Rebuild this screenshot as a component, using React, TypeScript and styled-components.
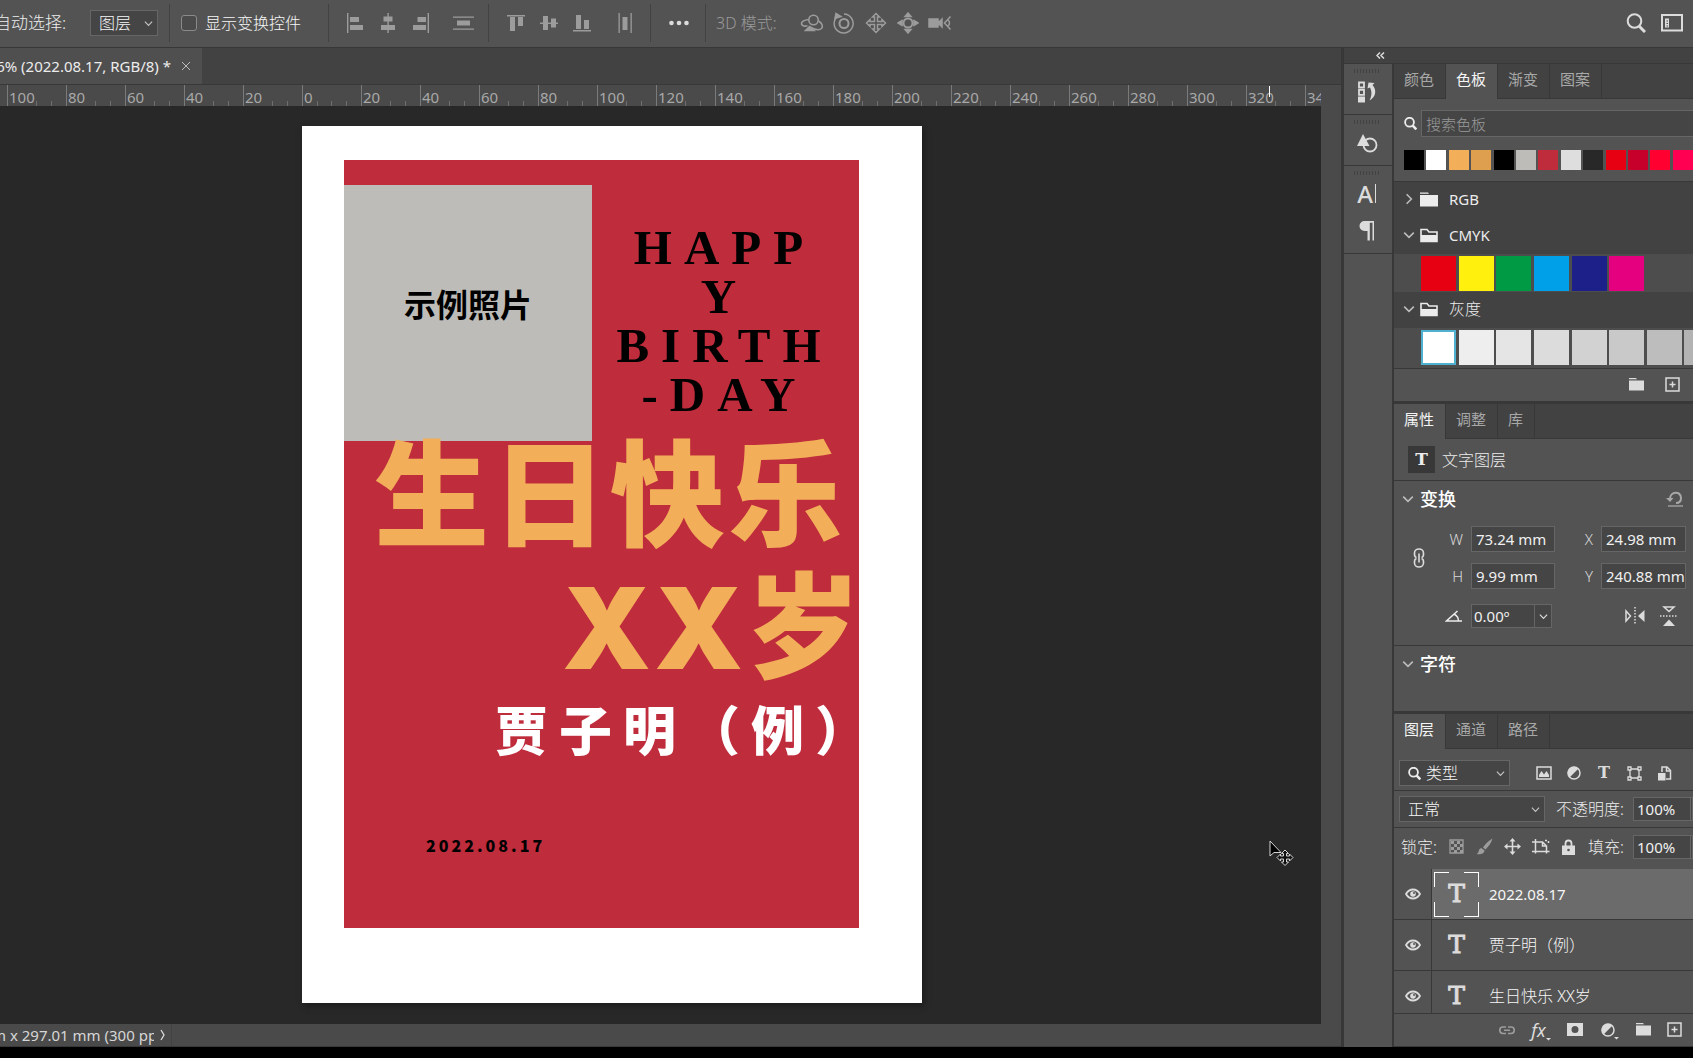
import React from "react";
import styled, { createGlobalStyle } from "styled-components";

const c = {
  bar: "#535353",
  dark: "#424242",
  ruler: "#4a4a4a",
  canvas: "#282828",
  line: "#383838",
  field: "#454545",
  fieldLine: "#666666",
  text: "#ececec",
  muted: "#a8a8a8",
  icon: "#dcdcdc",
  dimIcon: "#9c9c9c",
  red: "#bf2c3c",
  gold: "#f2ae59",
};

const uiFont = `"Noto Sans", "Noto Sans CJK SC", sans-serif`;

const GlobalStyle = createGlobalStyle`
  *, *::before, *::after { box-sizing: border-box; }
  body { margin: 0; background: #000; overflow: hidden; }
  button, input, select { font: inherit; color: inherit; }
`;

const Shell = styled.div`
  display: flex;
  flex-direction: column;
  height: 100vh;
  padding-bottom: 11px;
  background: #000;
  color: ${c.text};
  font: 300 15px/20px ${uiFont};
  overflow: hidden;
`;

/* ---------- shared controls ---------- */

const IconButton = styled.button<{ $w?: number; $dim?: boolean }>`
  display: flex;
  align-items: center;
  justify-content: center;
  flex: none;
  width: ${(p) => p.$w ?? 20}px;
  height: 22px;
  padding: 0;
  border: 0;
  background: none;
  color: ${(p) => (p.$dim ? c.dimIcon : c.icon)};
`;

const SelectBox = styled.div<{ $w: number; $h: number }>`
  position: relative;
  display: flex;
  align-items: center;
  flex: none;
  width: ${(p) => p.$w}px;
  height: ${(p) => p.$h}px;
  border: 1px solid ${c.fieldLine};
  background: ${c.field};
`;

const Select = styled.select<{ $pad: number }>`
  appearance: none;
  width: 100%;
  height: 100%;
  padding: 0 20px 0 ${(p) => p.$pad}px;
  border: 0;
  background: none;
  color: #f6f6f6;
  font-size: 16px;
`;

const SelectArrow = styled.span`
  position: absolute;
  right: 4px;
  top: 50%;
  display: flex;
  margin-top: -4px;
  color: #c4c4c4;
  pointer-events: none;
`;

const SelectLead = styled.span`
  position: absolute;
  left: 8px;
  display: flex;
  pointer-events: none;
`;

const Chevron = ({ size = 9 }: { size?: number }) => (
  <svg width={size} height={size} viewBox="0 0 10 10" fill="none" stroke="currentColor" strokeWidth="1.3">
    <path d="M1 3l4 4 4-4" />
  </svg>
);

function Dropdown(p: { label: string; value: string; w: number; h: number; pad: number; lead?: React.ReactNode }) {
  return (
    <SelectBox $w={p.w} $h={p.h}>
      {p.lead && <SelectLead>{p.lead}</SelectLead>}
      <Select aria-label={p.label} $pad={p.pad} defaultValue={p.value}>
        <option>{p.value}</option>
      </Select>
      <SelectArrow>
        <Chevron />
      </SelectArrow>
    </SelectBox>
  );
}

/* ---------- icons ---------- */

type Shape = { children: React.ReactNode; w?: number; h?: number; sw?: number };
const Line = ({ children, w = 20, h = 20, sw = 1.5 }: Shape) => (
  <svg width={w} height={h} viewBox={`0 0 ${w} ${h}`} fill="none" stroke="currentColor" strokeWidth={sw}>
    {children}
  </svg>
);
const Solid = ({ children, w = 20, h = 20 }: Shape) => (
  <svg width={w} height={h} viewBox={`0 0 ${w} ${h}`} fill="currentColor">
    {children}
  </svg>
);

const AlignLeft = () => <Solid><path d="M2 0h1.4v20H2zM5 4h9v5H5zM5 12h13v5H5z" /></Solid>;
const AlignCenter = () => <Solid><path d="M9.4 0h1.4v20H9.4zM5.5 3.500h9v5h-9zM3 12h14v5H3z" /></Solid>;
const AlignRight = () => <Solid><path d="M16.600 0H18v20h-1.400zM6.500 4h8.500v5H6.500zM2 12h13v5H2z" /></Solid>;
const DistributeV = () => <Solid w={22}><path d="M0 3.500h21v1.300H0zM0 15.500h21v1.300H0zM4 7.500h13v5H4z" /></Solid>;
const AlignTop = () => <Solid><path d="M1 2h18v1.400H1zM4 4h5v14H4zM12 4h5v9h-5z" /></Solid>;
const AlignMiddle = () => <Solid><path d="M1 9.500h18v1.400H1zM4 3h5v14H4zM12 5.500h5v9h-5z" /></Solid>;
const AlignBottom = () => <Solid><path d="M1 17h18v1.400H1zM4 2h5v14H4zM12 7h5v9h-5z" /></Solid>;
const DistributeH = () => <Solid><path d="M3.500 0h1.300v21H3.500zM15.500 0h1.300v21h-1.300zM7.500 4h5v13h-5z" /></Solid>;
const Dots = () => <Solid><circle cx="2.500" cy="10" r="2.300" /><circle cx="10" cy="10" r="2.300" /><circle cx="17.500" cy="10" r="2.300" /></Solid>;

const Orbit3D = () => (
  <Line w={24} sw={1.6}>
    <circle cx="13.500" cy="7" r="4.700" />
    <path d="M8.500 6.500C4 7 1 9 1.500 11c.400 2 3.500 2.500 6 1.800M18.500 8c3.500 2 5 5.500 3 7.500-2 1.800-7 1-11.500-1.500" />
    <path d="M5.500 17.500l4-4 4.500 4z" fill="currentColor" />
  </Line>
);
const Roll3D = () => (
  <Line w={22} h={22}>
    <circle cx="11" cy="11.500" r="4.500" strokeWidth="2" />
    <path d="M5.500 3.500A9.500 9.500 0 1 0 11 2" />
    <path d="M2 6.500l1-5 5 3z" fill="currentColor" />
  </Line>
);
const Pan3D = () => (
  <Line w={22} h={22}>
    <path d="M11 1.500l3.500 3.500h-2v4.500H17v-2l3.500 3.500-3.500 3.500v-2h-4.500V17h2L11 20.500 7.500 17h2v-4.500H5v2L1.500 11 5 7.500v2h4.500V5h-2z" />
  </Line>
);
const Slide3D = () => (
  <Line w={22} h={22}>
    <circle cx="11" cy="11" r="4.500" strokeWidth="2" />
    <path d="M11 1l3 3.500H8zM11 21l-3-3.500h6zM1 11l4-2.500v5zM21 11l-4-2.500v5z" fill="currentColor" />
  </Line>
);
const Camera3D = () => (
  <Line w={24}>
    <path d="M1 6h9v8H1zM10 10l4-4v8z" fill="currentColor" />
    <path d="M22.500 3.500L16.500 10l6 6.500M20 7c2 1.500 2 4.500 0 6" />
  </Line>
);
const Magnifier = ({ size = 20 }: { size?: number }) => (
  <svg width={size} height={size} viewBox="0 0 20 20" fill="none" stroke="currentColor">
    <circle cx="8.500" cy="8" r="6.800" strokeWidth={size < 16 ? 2.800 : 2} />
    <path d="M13 13l6 6" strokeWidth={size < 16 ? 4 : 3} />
  </svg>
);
const WorkspaceIcon = () => (
  <Line w={22} h={18} sw={2}>
    <path d="M1 1h20v15.500H1z" />
    <path d="M4 4.500h4v9H4z" fill="currentColor" stroke="none" />
    <path d="M5.500 7h1.500M5.500 9.500h1.500M5.500 12h1.500" stroke={c.bar} strokeWidth="1" />
  </Line>
);
const HistoryIcon = () => (
  <Line w={20} h={22} sw={1.8}>
    <path d="M2 1.500h5v5H2zM2 8.800h5v5H2z" />
    <path d="M1 15.500h7v6H1z" fill="currentColor" stroke="none" />
    <path d="M10.500 7.500l1-6 6 .500-2 2c4.500 5 3.500 12-3 15.500 2.500-5 2.500-9 .500-13z" fill="currentColor" stroke="none" />
  </Line>
);
const AdjustIcon = () => (
  <Line w={22} sw={1.8}>
    <circle cx="14" cy="12" r="6.500" />
    <path d="M7 1l6.500 12H1z" fill="currentColor" stroke="none" />
  </Line>
);
const ParagraphIcon = () => (
  <Solid w={18} h={20}><path d="M6.500 0H16v19.500h-1.500V1.800h-2.700v17.700H9.500V10h-3a5 5 0 0 1 0-10z" /></Solid>
);
const FolderIcon = ({ open }: { open?: boolean }) =>
  open ? (
    <Line w={18} h={15} sw={1.600}>
      <path d="M1 13.500V1.500h6l2 2.500h8v9.500z" />
      <path d="M1 7h16v6.500H1z" fill="currentColor" stroke="none" />
    </Line>
  ) : (
    <Solid w={18} h={15}><path d="M0 .500h8l1 1.300H0zM0 3h18v11.500H0z" /></Solid>
  );
const FolderSmall = () => <Solid w={15} h={13}><path d="M0 0h7l1 1.300H0zM0 2.500h15V12.500H0z" /></Solid>;
const PlusBox = () => <Line w={15} h={15} sw={1.500}><path d="M1 1h13v13H1zM7.500 4.500v6M4.500 7.500h6" /></Line>;
const LinkV = () => (
  <Line w={12} h={20} sw={1.600}>
    <path d="M3.500 9.500C1 9 1.500 6 1.500 5a4.500 4 0 0 1 9 0c0 1 .500 4-2 4.500M3.500 10.500C1 11 1.500 14 1.500 15a4.500 4 0 0 0 9 0c0-1 .500-4-2-4.500M6 5.500v9" />
  </Line>
);
const ResetIcon = () => (
  <Line w={18} h={18} sw={2}>
    <path d="M4 9C4 1 15 .500 15 8c0 3-2 5-5 5" />
    <path d="M0 8h7.500L4 12z" fill="currentColor" stroke="none" />
    <path d="M2 16h15" strokeWidth="1.300" />
  </Line>
);
const AngleIcon = () => <Line w={18} h={14}><path d="M12.500 2L1.500 12H17M9 5c3 1.500 4.500 4 4.500 7" /></Line>;
const FlipH = () => (
  <Line w={22} h={20} sw={1.500}>
    <path d="M2 5v10l4.500-5z" />
    <path d="M20.500 4v12l-6.500-6z" fill="currentColor" stroke="none" />
    <path d="M11 1v18" strokeDasharray="1.500 1.500" />
  </Line>
);
const FlipV = () => (
  <Line w={20} h={22} sw={1.500}>
    <path d="M5 2h10l-5 4.500z" />
    <path d="M4 21h12l-6-6.500z" fill="currentColor" stroke="none" />
    <path d="M1 11h18" strokeDasharray="1.500 1.500" />
  </Line>
);
const ImageIcon = () => (
  <Line w={16} h={14}><path d="M1 1h14v12H1z" /><path d="M3 11V9l2.500-4L8 8.500 10.500 5 13 9v2z" fill="currentColor" stroke="none" /></Line>
);
const HalfCircle = () => (
  <Line w={14} h={14} sw={1.500}><circle cx="7" cy="7" r="6" /><path d="M2.500 11.500a6.300 6.300 0 0 1 9-9z" fill="currentColor" stroke="none" /></Line>
);
const HalfCircleMenu = () => (
  <Line w={20} h={20} sw={1.500}>
    <circle cx="9" cy="10" r="6" />
    <path d="M4.500 14.500a6.300 6.300 0 0 1 9-9z" fill="currentColor" stroke="none" />
    <path d="M15 17h5l-2.500 2.500z" fill="currentColor" stroke="none" />
  </Line>
);
const ShapeIcon = () => (
  <Line w={15} h={15} sw={1.300}>
    <path d="M3 3h9v9H3z" />
    <g fill={c.bar}><path d="M1 1h3v3H1zM11 1h3v3h-3zM1 11h3v3H1zM11 11h3v3h-3z" /></g>
  </Line>
);
const SmartIcon = () => (
  <Line w={15} h={15} sw={1.500}><path d="M5 6V1h5l3.500 3.500V13H9" /><path d="M1 7h7.500v7.500H1z" fill="currentColor" stroke="none" /><path d="M9.500 1v4h4" /></Line>
);
const Checker = () => (
  <Line w={15} h={15} sw={1.300}><path d="M1 1h13v13H1z" /><path d="M2 2h3v3H2zM8 2h3v3H8zM5 5h3v3H5zM11 5h3v3h-3zM2 8h3v3H2zM8 8h3v3H8zM5 11h3v3H5zM11 11h3v3h-3z" fill="currentColor" stroke="none" /></Line>
);
const Brush = () => <Solid w={17} h={17}><path d="M16.500.500c-1 4-4 8-7 11l-2.500-2c2.500-4 6-7 9.500-9zM6 10.500l2.500 2C8.500 15.500 5 17 .500 16c2-1 2-2.500 2.500-4 .500-1.300 2-2 3-1.500z" /></Solid>;
const MoveIcon = () => <Line w={17} h={17} sw={1.600}><path d="M8.500 3v11M3 8.500h11" /><path d="M8.500 0l3 3.500h-6zM8.500 17l-3-3.500h6zM0 8.500l3.500-3v6zM17 8.500l-3.500 3v-6z" fill="currentColor" stroke="none" /></Line>;
const ArtboardIcon = () => <Line w={18} h={15} sw={1.500}><path d="M3.500 0v14.500M0 3h10.500l4 4v7.500M0 12.500h17.500M10.500 3v4h4M13 1.500h2M16.500 2v2" /></Line>;
const LockIcon = () => <Line w={13} h={16} sw={1.800}><path d="M3.500 7V4.500a3 3 0 0 1 6 0V7" /><path d="M0 6.500h13V16H0z" fill="currentColor" stroke="none" /><circle cx="6.500" cy="11" r="1.300" fill={c.bar} stroke="none" /></Line>;
const EyeIcon = () => <Line w={16} h={12} sw={1.800}><path d="M1 6c3.500-6 10.500-6 14 0-3.500 6-10.500 6-14 0z" /><circle cx="8" cy="6" r="2.800" fill="currentColor" stroke="none" /><circle cx="9" cy="5" r="1" fill={c.bar} stroke="none" /></Line>;
const LinkH = () => <Line w={18} h={10} sw={1.600}><path d="M8 2H5a3 3 0 0 0 0 6.500h3M10 2h3a3 3 0 0 1 0 6.500h-3M6 5.200h6" /></Line>;
const MaskIcon = () => <Solid w={16} h={13}><path fillRule="evenodd" d="M0 0h16v13H0zM8 3a3.500 3.500 0 1 0 0 7 3.500 3.500 0 0 0 0-7z" /></Solid>;
const PointerIcon = () => (
  <svg width="26" height="28" viewBox="0 0 26 28" fill="none">
    <path d="M2 1v15l4-3.500h7z" fill="#000" stroke="#d4d4d4" />
    <path d="M17 10l3.500 3.500h-2v2.500h3v-2L25 17.500 21.500 21v-2h-3v3h2L17 25.500 13.500 22h2v-3h-3v2L9 17.500l3.500-3.500v2h3v-2.500h-2z" fill="#111" stroke="#d4d4d4" />
  </svg>
);

/* ---------- options bar ---------- */

const OptionsBar = styled.header`
  display: flex;
  align-items: center;
  flex: none;
  height: 48px;
  padding-bottom: 1px;
  background: ${c.bar};
  border-bottom: 1px solid ${c.line};
  white-space: nowrap;
`;
const AutoSelect = styled.div`
  margin-left: -6px;
  width: 96px;
  flex: none;
  font-size: 17px;
`;
const Rule = styled.i<{ $before: number; $after: number }>`
  flex: none;
  width: 1px;
  height: 38px;
  margin: 0 ${(p) => p.$after}px 0 ${(p) => p.$before}px;
  background: #424242;
`;
const CheckLabel = styled.label`
  display: flex;
  align-items: center;
  gap: 8px;
  font-size: 16px;
  color: #f6f6f6;
`;
const Check = styled.input`
  appearance: none;
  width: 16px;
  height: 16px;
  margin: 0;
  border: 1px solid #8a8a8a;
  border-radius: 3px;
  background: #4b4b4b;
`;
const IconGroup = styled.div<{ $gap: number }>`
  display: flex;
  align-items: center;
  gap: ${(p) => p.$gap}px;
`;
const Detached = styled.div`
  margin-left: 22px;
`;
const Mode3D = styled.span`
  width: 84px;
  font-size: 16px;
  color: #9a9a9a;
`;
const BarEnd = styled.div`
  display: flex;
  align-items: center;
  gap: 15px;
  margin-left: auto;
  padding-right: 10px;
`;

function TopOptions() {
  return (
    <OptionsBar>
      <AutoSelect>自动选择:</AutoSelect>
      <Dropdown label="自动选择" value="图层" w={68} h={26} pad={8} />
      <Rule $before={11} $after={11} />
      <CheckLabel>
        <Check type="checkbox" />
        显示变换控件
      </CheckLabel>
      <Rule $before={27} $after={16} />
      <IconGroup $gap={13}>
        <IconButton $dim aria-label="左对齐"><AlignLeft /></IconButton>
        <IconButton $dim aria-label="水平居中"><AlignCenter /></IconButton>
        <IconButton $dim aria-label="右对齐"><AlignRight /></IconButton>
      </IconGroup>
      <Detached><IconButton $dim $w={22} aria-label="垂直分布"><DistributeV /></IconButton></Detached>
      <Rule $before={13} $after={17} />
      <IconGroup $gap={13}>
        <IconButton $dim aria-label="顶对齐"><AlignTop /></IconButton>
        <IconButton $dim aria-label="垂直居中"><AlignMiddle /></IconButton>
        <IconButton $dim aria-label="底对齐"><AlignBottom /></IconButton>
      </IconGroup>
      <Detached><IconButton $dim $w={22} aria-label="水平分布"><DistributeH /></IconButton></Detached>
      <Rule $before={14} $after={18} />
      <IconButton aria-label="更多"><Dots /></IconButton>
      <Rule $before={16} $after={10} />
      <Mode3D>3D 模式:</Mode3D>
      <IconGroup $gap={8}>
        <IconButton $dim $w={24} aria-label="环绕"><Orbit3D /></IconButton>
        <IconButton $dim $w={24} aria-label="滚动"><Roll3D /></IconButton>
        <IconButton $dim $w={24} aria-label="平移"><Pan3D /></IconButton>
        <IconButton $dim $w={24} aria-label="滑动"><Slide3D /></IconButton>
        <IconButton $dim $w={24} aria-label="变焦"><Camera3D /></IconButton>
      </IconGroup>
      <BarEnd>
        <IconButton aria-label="搜索"><Magnifier /></IconButton>
        <IconButton $w={22} aria-label="工作区"><WorkspaceIcon /></IconButton>
      </BarEnd>
    </OptionsBar>
  );
}

/* ---------- document ---------- */

const Main = styled.main`
  display: flex;
  flex: 1;
  min-height: 0;
`;
const Doc = styled.section`
  display: flex;
  flex-direction: column;
  flex: 1;
  min-width: 0;
  background: ${c.ruler};
  border-right: 3px solid ${c.line};
`;
const TabStrip = styled.div`
  display: flex;
  flex: none;
  height: 37px;
  background: ${c.dark};
  border-bottom: 1px solid ${c.line};
`;
const DocTab = styled.div`
  display: flex;
  align-items: center;
  justify-content: flex-end;
  gap: 9px;
  width: 202px;
  padding-right: 11px;
  background: #4f4f4f;
  font-size: 15px;
  font-weight: 400;
  white-space: nowrap;
  overflow: hidden;
`;
const CloseButton = styled(IconButton)`
  width: 11px;
  color: #bdbdbd;
`;
const Ruler = styled.div`
  position: relative;
  display: flex;
  flex: none;
  height: 21px;
  margin-right: 20px;
  padding-left: 7px;
  overflow: hidden;
`;
const RulerCell = styled.div`
  flex: none;
  width: 59px;
  height: 21px;
  border-left: 1px solid #7a7a7a;
  background: linear-gradient(#6e6e6e, #6e6e6e) 14px 100% / 1px 5px no-repeat,
    linear-gradient(#6e6e6e, #6e6e6e) 28px 100% / 1px 5px no-repeat,
    linear-gradient(#6e6e6e, #6e6e6e) 43px 100% / 1px 5px no-repeat;
  color: ${c.muted};
  font-weight: 400;
  font-size: 15px;
  line-height: 25px;
`;
const RulerNumber = styled.span`
  display: inline-block;
  height: 21px;
  padding-left: 1px;
  background: ${c.ruler};
`;
const RulerMark = styled.i`
  position: absolute;
  left: 1269px;
  top: 1px;
  width: 1px;
  height: 11px;
  background: #fff;
`;
const Canvas = styled.div`
  position: relative;
  flex: 1;
  min-height: 0;
  margin-right: 20px;
  padding: 20px 0 0 302px;
  background: ${c.canvas};
  overflow: hidden;
`;
const Pointer = styled.div`
  position: absolute;
  left: 1268px;
  top: 734px;
`;
const Artboard = styled.article`
  width: 620px;
  height: 877px;
  padding: 34px 42px 0;
  background: #fff;
  box-shadow: 2px 3px 6px #1c1c1c;
`;
const Poster = styled.div`
  width: 515px;
  height: 768px;
  padding-top: 25px;
  background: ${c.red};
`;
const PosterTop = styled.div`
  display: flex;
  height: 256px;
`;
const Photo = styled.div`
  display: flex;
  align-items: center;
  justify-content: center;
  flex: none;
  width: 248px;
  padding: 0 0 20px;
  background: #bdbcb8;
  color: #000;
  font: 700 32px/40px "Noto Sans CJK SC", sans-serif;
`;
const Birthday = styled.h1`
  flex: 1;
  margin: 0;
  padding: 38px 2px 0 0;
  color: #000;
  font: 700 49px/49px "Liberation Serif", serif;
  letter-spacing: 12px;
  text-align: center;
`;
const TitleBlock = styled.div`
  margin: -20px -8px 0 0;
`;
const Title = styled.h2<{ $right: number }>`
  margin: 0;
  padding-right: ${(p) => p.$right}px;
  color: ${c.gold};
  font: 900 115px/132px "Noto Sans CJK SC", sans-serif;
  letter-spacing: 3px;
  text-align: right;
  white-space: nowrap;
`;
const TitleLatin = styled.span`
  font: 900 113px/80px Inter, sans-serif;
`;
const PersonName = styled.p`
  margin: 3px 0 0;
  padding-left: 151px;
  color: #fff;
  font: 900 53px/80px "Noto Sans CJK SC", sans-serif;
  letter-spacing: 11px;
  white-space: nowrap;
`;
const PosterDate = styled.p`
  margin: 65px 0 0 82px;
  color: #000;
  font: 900 16px/24px "Noto Sans CJK SC", sans-serif;
  letter-spacing: 3px;
`;
const StatusBar = styled.footer`
  display: flex;
  flex: none;
  align-items: center;
  height: 23px;
  padding-bottom: 1px;
  border-bottom: 1px solid ${c.line};
`;
const StatusText = styled.div`
  flex: none;
  width: 162px;
  margin-left: -8px;
  overflow: hidden;
  white-space: nowrap;
  font-weight: 400;
  color: #d6d6d6;
`;
const StatusMore = styled(IconButton)`
  width: 18px;
  border-right: 1px solid #424242;
`;

const marks = [100, 80, 60, 40, 20, 0, 20, 40, 60, 80, 100, 120, 140, 160, 180, 200, 220, 240, 260, 280, 300, 320, 340];

function DocumentArea() {
  return (
    <Doc>
      <TabStrip>
        <DocTab>
          6% (2022.08.17, RGB/8) *
          <CloseButton aria-label="关闭">
            <Line w={10} h={10} sw={1}><path d="M1 1l8 8M9 1l-8 8" /></Line>
          </CloseButton>
        </DocTab>
      </TabStrip>
      <Ruler>
        {marks.map((m, i) => (
          <RulerCell key={i}><RulerNumber>{m}</RulerNumber></RulerCell>
        ))}
        <RulerMark />
      </Ruler>
      <Canvas>
        <Artboard>
          <Poster>
            <PosterTop>
              <Photo>示例照片</Photo>
              <Birthday>HAPP<br />Y<br />BIRTH<br />-DAY</Birthday>
            </PosterTop>
            <TitleBlock>
              <Title $right={21}>生日快乐</Title>
              <Title $right={3}><TitleLatin>XX</TitleLatin>岁</Title>
            </TitleBlock>
            <PersonName>贾子明（例）</PersonName>
            <PosterDate>2022.08.17</PosterDate>
          </Poster>
        </Artboard>
        <Pointer><PointerIcon /></Pointer>
      </Canvas>
      <StatusBar>
        <StatusText>m x 297.01 mm (300 ppi)</StatusText>
        <StatusMore aria-label="更多信息">
          <Line w={6} h={12} sw={1.300}><path d="M1 1l3 5-3 5" /></Line>
        </StatusMore>
      </StatusBar>
    </Doc>
  );
}

/* ---------- dock ---------- */

const Side = styled.aside`
  display: flex;
  flex-direction: column;
  flex: none;
  width: 349px;
`;
const SideHead = styled.div`
  display: flex;
  flex: none;
  height: 16px;
  padding-left: 31px;
  background: ${c.dark};
  border-bottom: 1px solid ${c.line};
`;
const CollapseButton = styled(IconButton)`
  width: 11px;
  height: 14px;
`;
const SideBody = styled.div`
  display: flex;
  flex: 1;
  min-height: 0;
`;
const Dock = styled.nav`
  flex: none;
  width: 50px;
  background: ${c.bar};
  border-right: 2px solid ${c.line};
`;
const DockGroup = styled.div`
  display: flex;
  flex-direction: column;
  align-items: center;
  padding: 5px 3px 4px 0;
  border-bottom: 1px solid ${c.line};
`;
const Grip = styled.i`
  width: 25px;
  height: 4px;
  background: repeating-linear-gradient(90deg, #424242 0 1px, transparent 1px 3px);
`;
const DockButton = styled(IconButton)`
  width: 36px;
  height: 37px;
`;
const TypeGlyph = styled.span`
  padding-right: 2px;
  border-right: 1px solid currentColor;
  font: 500 24px/19px "Noto Sans", sans-serif;
`;

const DockColumn = () => (
  <Dock>
    <DockGroup><Grip /><DockButton aria-label="历史记录"><HistoryIcon /></DockButton></DockGroup>
    <DockGroup><Grip /><DockButton aria-label="调整"><AdjustIcon /></DockButton></DockGroup>
    <DockGroup>
      <Grip />
      <DockButton aria-label="字符"><TypeGlyph>A</TypeGlyph></DockButton>
      <DockButton aria-label="段落"><ParagraphIcon /></DockButton>
    </DockGroup>
  </Dock>
);

/* ---------- panels ---------- */

const Panels = styled.div`
  display: flex;
  flex-direction: column;
  flex: 1;
  min-width: 0;
  background: ${c.bar};
  overflow: hidden;
`;
const Panel = styled.section<{ $grow?: boolean; $h?: number }>`
  display: flex;
  flex-direction: column;
  flex: ${(p) => (p.$grow ? "1" : "none")};
  min-height: ${(p) => (p.$h ? `${p.$h}px` : "0")};
  border-bottom: ${(p) => (p.$grow ? "1px" : "3px")} solid ${c.line};
`;
const Tabs = styled.div`
  display: flex;
  flex: none;
  height: 35px;
  background: ${c.dark};
`;
const Tab = styled.button<{ $on?: boolean }>`
  flex: none;
  padding: 0 11px 5px 10px;
  border: 0;
  border-right: 1px solid ${c.line};
  border-bottom: ${(p) => (p.$on ? "0" : `1px solid ${c.line}`)};
  background: ${(p) => (p.$on ? c.bar : "transparent")};
  color: ${(p) => (p.$on ? "#f4f4f4" : c.muted)};
  font-size: 15px;
  font-weight: 400;
`;
const TabRest = styled.i`
  flex: 1;
  border-bottom: 1px solid ${c.line};
`;

function TabRow({ names, on }: { names: string[]; on: number }) {
  return (
    <Tabs role="tablist">
      {names.map((n, i) => (
        <Tab key={n} role="tab" aria-selected={i === on} $on={i === on}>{n}</Tab>
      ))}
      <TabRest />
    </Tabs>
  );
}

const SearchRow = styled.label`
  display: flex;
  align-items: center;
  gap: 4px;
  padding: 11px 0 0 10px;
`;
const SearchField = styled.input`
  flex: 1;
  min-width: 0;
  height: 27px;
  padding: 0 4px;
  border: 1px solid ${c.fieldLine};
  border-right: 0;
  background: ${c.field};
  &::placeholder { color: #9a9a9a; opacity: 1; }
`;
const RecentColors = styled.div`
  display: flex;
  justify-content: space-between;
  padding: 13px 0 11px 10px;
  border-bottom: 1px solid ${c.line};
`;
const Swatch = styled.button<{ $c: string; $s: number; $on?: boolean }>`
  flex: none;
  width: ${(p) => p.$s}px;
  height: ${(p) => p.$s}px;
  padding: 0;
  border: ${(p) => (p.$on ? "2px solid #4fb0cf" : "0")};
  background: ${(p) => p.$c};
`;
const FolderRow = styled.div`
  display: flex;
  align-items: center;
  height: 36px;
  padding: 0 0 2px 9px;
  background: ${c.dark};
`;
const FolderToggle = styled(IconButton)<{ $closed?: boolean }>`
  width: 12px;
  margin-right: 5px;
  color: #bdbdbd;
  transform: ${(p) => (p.$closed ? "rotate(-90deg)" : "none")};
`;
const FolderName = styled.span<{ $cjk?: boolean }>`
  margin-left: 11px;
  font-size: ${(p) => (p.$cjk ? 16 : 15)}px;
  font-weight: ${(p) => (p.$cjk ? 300 : 400)};
`;
const SwatchStrip = styled.div<{ $h: number }>`
  display: grid;
  grid-template-columns: repeat(8, 1fr);
  width: 328px;
  height: ${(p) => p.$h}px;
  padding: 2px 0 0 27px;
  background: #4d4d4d;
`;
const PanelFoot = styled.div<{ $gap: number }>`
  display: flex;
  align-items: center;
  justify-content: flex-end;
  gap: ${(p) => p.$gap}px;
  flex: none;
  height: 33px;
  padding: 0 11px 1px 0;
  border-top: 1px solid ${c.line};
  background: ${c.bar};
`;

const recent = ["#000", "#fff", "#f2ae59", "#de9f4e", "#000", "#bdbcb8", "#bf2c3c", "#dedede", "#282828", "#e60012", "#c7002b", "#ff0030", "#ff0052"];
const cmyk = ["#e60012", "#fff10d", "#009a44", "#00a0e9", "#1d2088", "#e4007f"];
const grays = ["#ffffff", "#eeeeee", "#e5e5e5", "#dcdcdc", "#d2d2d2", "#c9c9c9", "#bdbdbd", "#b3b3b3"];

function Folder({ name, closed, cjk }: { name: string; closed?: boolean; cjk?: boolean }) {
  return (
    <FolderRow>
      <FolderToggle $closed={closed} aria-label={`展开 ${name}`}><Chevron size={12} /></FolderToggle>
      <FolderIcon open={!closed} />
      <FolderName $cjk={cjk}>{name}</FolderName>
    </FolderRow>
  );
}

const SwatchPanel = () => (
  <Panel>
    <TabRow names={["颜色", "色板", "渐变", "图案"]} on={1} />
    <SearchRow>
      <Magnifier size={13} />
      <SearchField placeholder="搜索色板" aria-label="搜索色板" />
    </SearchRow>
    <RecentColors>
      {recent.map((v, i) => <Swatch key={i} $c={v} $s={20} aria-label={v} />)}
    </RecentColors>
    <Folder name="RGB" closed />
    <Folder name="CMYK" />
    <SwatchStrip $h={38}>{cmyk.map((v) => <Swatch key={v} $c={v} $s={35} aria-label={v} />)}</SwatchStrip>
    <Folder name="灰度" cjk />
    <SwatchStrip $h={40}>{grays.map((v, i) => <Swatch key={v} $c={v} $s={35} $on={i === 0} aria-label={v} />)}</SwatchStrip>
    <PanelFoot $gap={16}>
      <IconButton aria-label="新建组"><FolderSmall /></IconButton>
      <IconButton aria-label="新建色板"><PlusBox /></IconButton>
    </PanelFoot>
  </Panel>
);

const KindRow = styled.div`
  display: flex;
  align-items: center;
  gap: 7px;
  height: 42px;
  padding-left: 14px;
  border-bottom: 1px solid ${c.line};
  font-size: 16px;
`;
const KindBadge = styled.span`
  width: 27px;
  height: 27px;
  background: #383838;
  font: 700 17px/27px "DejaVu Serif", serif;
  text-align: center;
`;
const SectionHead = styled.div`
  display: flex;
  align-items: center;
  gap: 6px;
  height: 38px;
  padding: 0 8px 2px 8px;
  color: #fff;
  font-size: 18px;
  font-weight: 500;
`;
const SectionToggle = styled(IconButton)`
  width: 12px;
  color: #bdbdbd;
`;
const ResetButton = styled(IconButton)`
  margin-left: auto;
  color: ${c.muted};
`;
const TransformGrid = styled.div`
  display: grid;
  grid-template-columns: 31px 46px 84px 46px 85px;
  grid-template-rows: 26px 26px;
  row-gap: 11px;
  align-items: center;
  padding-top: 7px;
  overflow: hidden;
`;
const LinkCell = styled.div`
  grid-row: 1 / 3;
  display: flex;
  justify-content: flex-end;
`;
const AxisLabel = styled.label`
  padding-right: 8px;
  color: #d8d8d8;
  text-align: right;
`;
const Field = styled.input`
  width: 100%;
  min-width: 0;
  height: 26px;
  padding: 0 0 0 4px;
  border: 1px solid ${c.fieldLine};
  background: ${c.field};
  color: #f0f0f0;
  font-size: 15px;
  font-weight: 400;
`;
const AngleRow = styled.div`
  display: flex;
  align-items: center;
  height: 57px;
  padding: 0 13px 2px 51px;
  border-bottom: 1px solid ${c.line};
`;
const AngleField = styled(Field)`
  width: 64px;
  height: 24px;
  margin-left: 8px;
  padding-left: 2px;
`;
const AngleMore = styled(IconButton)`
  width: 17px;
  height: 24px;
  border: 1px solid ${c.fieldLine};
  border-left: 0;
  background: ${c.field};
`;
const FlipGroup = styled.div`
  display: flex;
  gap: 12px;
  margin-left: auto;
`;

const PropertiesPanel = () => (
  <Panel $h={310}>
    <TabRow names={["属性", "调整", "库"]} on={0} />
    <KindRow><KindBadge>T</KindBadge>文字图层</KindRow>
    <SectionHead>
      <SectionToggle aria-label="折叠变换"><Chevron size={12} /></SectionToggle>
      变换
      <ResetButton aria-label="重置"><ResetIcon /></ResetButton>
    </SectionHead>
    <TransformGrid>
      <LinkCell><IconButton $w={12} aria-label="链接宽高"><LinkV /></IconButton></LinkCell>
      <AxisLabel htmlFor="w">W</AxisLabel><Field id="w" defaultValue="73.24 mm" />
      <AxisLabel htmlFor="x">X</AxisLabel><Field id="x" defaultValue="24.98 mm" />
      <AxisLabel htmlFor="h">H</AxisLabel><Field id="h" defaultValue="9.99 mm" />
      <AxisLabel htmlFor="y">Y</AxisLabel><Field id="y" defaultValue="240.88 mm" />
    </TransformGrid>
    <AngleRow>
      <AngleIcon />
      <AngleField aria-label="旋转角度" defaultValue="0.00º" />
      <AngleMore aria-label="角度预设"><Chevron /></AngleMore>
      <FlipGroup>
        <IconButton $w={22} aria-label="水平翻转"><FlipH /></IconButton>
        <IconButton $w={22} aria-label="垂直翻转"><FlipV /></IconButton>
      </FlipGroup>
    </AngleRow>
    <SectionHead>
      <SectionToggle aria-label="折叠字符"><Chevron size={12} /></SectionToggle>
      字符
    </SectionHead>
  </Panel>
);

const FilterRow = styled.div`
  display: flex;
  align-items: center;
  justify-content: space-between;
  flex: none;
  height: 42px;
  padding: 7px 19px 0 5px;
  border-bottom: 1px solid ${c.line};
`;
const FilterIcons = styled.div`
  display: flex;
  gap: 10px;
`;
const TypeLetter = styled.span`
  font: 700 16px/20px "DejaVu Serif", serif;
`;
const BlendRow = styled.div`
  display: flex;
  align-items: center;
  justify-content: space-between;
  flex: none;
  height: 37px;
  padding-left: 5px;
  border-bottom: 1px solid ${c.line};
  font-size: 16px;
  white-space: nowrap;
`;
const LockRow = styled(BlendRow)`
  height: 41px;
  padding: 0 0 4px 7px;
  border-bottom: 0;
`;
const Percent = styled.label`
  display: flex;
  align-items: center;
  gap: 9px;
`;
const PercentField = styled(Field)`
  width: 60px;
  height: 24px;
  padding-left: 3px;
  border-right: 3px double ${c.fieldLine};
`;
const LockIcons = styled.div`
  display: flex;
  gap: 8px;
`;
const LayerList = styled.ul`
  flex: 1;
  min-height: 0;
  margin: 0;
  padding: 0;
  list-style: none;
  overflow: hidden;
`;
const LayerRow = styled.li`
  display: flex;
  height: 51px;
  border-bottom: 1px solid ${c.line};
`;
const Visibility = styled.button`
  display: flex;
  align-items: center;
  justify-content: center;
  flex: none;
  width: 38px;
  padding: 0;
  border: 0;
  border-right: 1px solid ${c.line};
  background: none;
  color: ${c.icon};
`;
const LayerBody = styled.div<{ $on?: boolean }>`
  display: flex;
  align-items: center;
  gap: 10px;
  flex: 1;
  padding-left: 2px;
  background: ${(p) => (p.$on ? "#6b6b6b" : "none")};
`;
const Thumb = styled.span<{ $on?: boolean }>`
  position: relative;
  display: grid;
  place-items: center;
  width: 45px;
  height: 45px;
  border: 1px solid ${(p) => (p.$on ? "#fff" : "transparent")};
  color: ${c.icon};
  font: 400 25px/30px "DejaVu Serif", serif;
  -webkit-text-stroke: 1px currentColor;
  &::before, &::after {
    content: "";
    display: ${(p) => (p.$on ? "block" : "none")};
    position: absolute;
    background: #6b6b6b;
  }
  &::before { left: 14px; right: 14px; top: -1px; bottom: -1px; }
  &::after { top: 14px; bottom: 14px; left: -1px; right: -1px; }
`;
const ThumbLetter = styled.span`
  position: relative;
  z-index: 1;
`;
const LayerName = styled.span<{ $cjk?: boolean }>`
  color: #f6f6f6;
  font-size: ${(p) => (p.$cjk ? 16 : 15)}px;
  font-weight: ${(p) => (p.$cjk ? 300 : 400)};
  white-space: nowrap;
`;
const Effects = styled.span`
  font: italic 400 18px/20px "Noto Sans", sans-serif;
`;
const EffectsMark = styled.span`
  align-self: flex-end;
  display: flex;
`;

const layers = ["2022.08.17", "贾子明（例）", "生日快乐 XX岁"];

const LayersPanel = () => (
  <Panel $grow>
    <TabRow names={["图层", "通道", "路径"]} on={0} />
    <FilterRow>
      <Dropdown label="图层类型" value="类型" w={111} h={26} pad={26} lead={<Magnifier size={13} />} />
      <FilterIcons>
        <IconButton aria-label="像素图层"><ImageIcon /></IconButton>
        <IconButton aria-label="调整图层"><HalfCircle /></IconButton>
        <IconButton aria-label="文字图层"><TypeLetter>T</TypeLetter></IconButton>
        <IconButton aria-label="形状图层"><ShapeIcon /></IconButton>
        <IconButton aria-label="智能对象"><SmartIcon /></IconButton>
      </FilterIcons>
    </FilterRow>
    <BlendRow>
      <Dropdown label="混合模式" value="正常" w={146} h={26} pad={8} />
      <Percent>不透明度:<PercentField defaultValue="100%" /></Percent>
    </BlendRow>
    <LockRow>
      锁定:
      <LockIcons>
        <IconButton $dim aria-label="锁定透明像素"><Checker /></IconButton>
        <IconButton $dim aria-label="锁定图像像素"><Brush /></IconButton>
        <IconButton aria-label="锁定位置"><MoveIcon /></IconButton>
        <IconButton aria-label="锁定画板"><ArtboardIcon /></IconButton>
        <IconButton aria-label="锁定全部"><LockIcon /></IconButton>
      </LockIcons>
      <Percent>填充:<PercentField defaultValue="100%" /></Percent>
    </LockRow>
    <LayerList>
      {layers.map((name, i) => (
        <LayerRow key={name}>
          <Visibility aria-label={`显示 ${name}`}><EyeIcon /></Visibility>
          <LayerBody $on={i === 0}>
            <Thumb $on={i === 0}><ThumbLetter>T</ThumbLetter></Thumb>
            <LayerName $cjk={i > 0}>{name}</LayerName>
          </LayerBody>
        </LayerRow>
      ))}
    </LayerList>
    <PanelFoot $gap={14}>
      <IconButton $dim aria-label="链接图层"><LinkH /></IconButton>
      <IconButton aria-label="图层样式">
        <Effects>fx</Effects>
        <EffectsMark><Solid w={5} h={3}><path d="M0 0h5L2.500 2.500z" /></Solid></EffectsMark>
      </IconButton>
      <IconButton aria-label="添加蒙版"><MaskIcon /></IconButton>
      <IconButton aria-label="新建调整图层"><HalfCircleMenu /></IconButton>
      <IconButton aria-label="新建组"><FolderSmall /></IconButton>
      <IconButton $w={15} aria-label="新建图层"><PlusBox /></IconButton>
    </PanelFoot>
  </Panel>
);

export default function App() {
  return (
    <Shell>
      <GlobalStyle />
      <TopOptions />
      <Main>
        <DocumentArea />
        <Side>
          <SideHead>
            <CollapseButton aria-label="展开面板">
              <Line w={9} h={7} sw={1.500}><path d="M4 .500l-3 3 3 3M8 .500l-3 3 3 3" /></Line>
            </CollapseButton>
          </SideHead>
          <SideBody>
            <DockColumn />
            <Panels>
              <SwatchPanel />
              <PropertiesPanel />
              <LayersPanel />
            </Panels>
          </SideBody>
        </Side>
      </Main>
    </Shell>
  );
}
